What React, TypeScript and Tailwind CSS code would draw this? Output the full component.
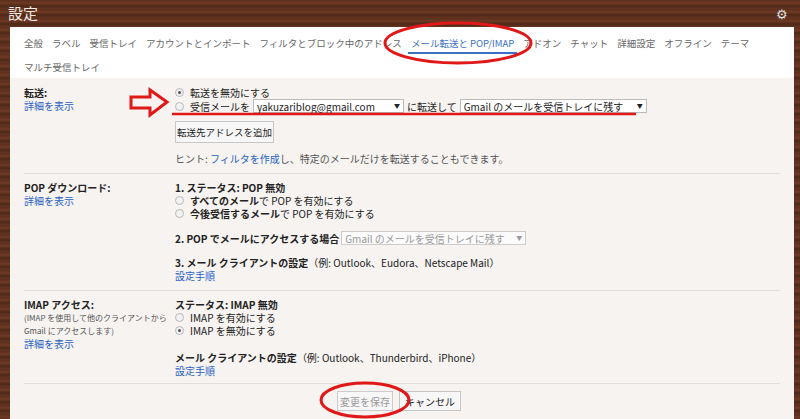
import React from "react";

const Radio = ({ on }: { on?: boolean }) => (
  <span className="inline-flex w-[9px] h-[9px] rounded-full border border-[#b8b8b8] bg-[#f2f2f2] items-center justify-center mr-[6px] shrink-0">
    {on && <span className="w-[3px] h-[3px] rounded-full bg-[#555]" />}
  </span>
);

const Link = ({ children }: { children: React.ReactNode }) => <span className="text-[#2a62c4]">{children}</span>;
const Arrow = () => <span className="text-[6px] leading-none">▼</span>;

export default function App() {
  const tabs = ["全般", "ラベル", "受信トレイ", "アカウントとインポート", "フィルタとブロック中のアドレス"];
  const tabs2 = ["アドオン", "チャット", "詳細設定", "オフライン", "テーマ"];
  return (
    <div
      className="relative w-[800px] h-[419px] overflow-hidden text-[10px] text-[#222] whitespace-nowrap"
      style={{
        fontFamily: '"Noto Sans CJK JP", "Liberation Sans", sans-serif',
        background: "repeating-linear-gradient(180deg,#5a2e1c 0px,#6e3a24 3px,#4e2817 6px,#653421 9px)",
      }}
    >
      <div className="h-[27px] flex items-center justify-between pl-[8px] pr-[12px]">
        <span className="text-[15px] text-[#f0e8e2]">設定</span>
        <span className="text-[#ddd] text-[13px]">⚙</span>
      </div>
      <div className="ml-[10px] w-[784px] h-[392px] bg-[#f6f3f0] flex flex-col">
        <div className="bg-white px-[14px] pt-[5px] h-[51px] text-[9.5px] text-[#666]">
          <div className="flex gap-[9px] h-[22px] items-center">
            {tabs.map((t) => <span key={t}>{t}</span>)}
            <span className="text-[#3b72c4] border-b-2 border-[#3b72c4] h-[22px] flex items-center px-[3px] -mx-[3px] pt-[2px]">メール転送と POP/IMAP</span>
            {tabs2.map((t) => <span key={t}>{t}</span>)}
          </div>
          <div className="h-[22px] flex items-center mt-[2px]">マルチ受信トレイ</div>
        </div>
        <div className="px-[14px]">
          <div className="flex pt-[8px] pb-[8px] border-b border-[#e2dedb]">
            <div className="w-[151px] leading-[13px]">
              <div className="font-bold">転送:</div>
              <Link>詳細を表示</Link>
            </div>
            <div className="flex-1 leading-[13px]">
              <div className="flex items-center"><Radio on /><span>転送を無効にする</span></div>
              <div className="flex items-center">
                <Radio /><span>受信メールを</span>
                <span className="ml-[3px] w-[151px] h-[14px] border border-[#bbb] bg-white flex items-center justify-between px-[3px] text-[10px]"><span>yakuzariblog@gmail.com</span><Arrow /></span>
                <span className="mx-[3px]">に転送して</span>
                <span className="w-[187px] h-[14px] border border-[#bbb] bg-white flex items-center justify-between px-[3px]"><span>Gmail のメールを受信トレイに残す</span><Arrow /></span>
              </div>
              <div className="mt-[8px] w-[99px] h-[22px] border border-[#c6c6c6] bg-[#f7f7f7] flex items-center justify-center text-[9.5px]">転送先アドレスを追加</div>
              <div className="mt-[9px] text-[#555]">ヒント: <Link>フィルタを作成</Link>し、特定のメールだけを転送することもできます。</div>
            </div>
          </div>
          <div className="flex pt-[7px] pb-[8px] border-b border-[#e2dedb] leading-[13px]">
            <div className="w-[151px]">
              <div className="font-bold">POP ダウンロード:</div>
              <Link>詳細を表示</Link>
            </div>
            <div className="flex-1">
              <div className="font-bold">1. ステータス: POP 無効</div>
              <div className="flex items-center"><Radio /><span><b>すべてのメール</b>で POP を有効にする</span></div>
              <div className="flex items-center"><Radio /><span><b>今後受信するメール</b>で POP を有効にする</span></div>
              <div className="flex items-center mt-[11px]">
                <b>2. POP でメールにアクセスする場合</b>
                <span className="ml-[2px] w-[185px] h-[14px] border border-[#ccc] bg-[#fbfbfb] text-[#999] flex items-center justify-between px-[3px]"><span>Gmail のメールを受信トレイに残す</span><Arrow /></span>
              </div>
              <div className="mt-[11px]"><b>3. メール クライアントの設定</b>（例: Outlook、Eudora、Netscape Mail）</div>
              <Link>設定手順</Link>
            </div>
          </div>
          <div className="flex pt-[7px] pb-[6px] border-b border-[#e2dedb] leading-[13px]">
            <div className="w-[151px]">
              <div className="font-bold">IMAP アクセス:</div>
              <div className="text-[8px] text-[#555] leading-[13px]">(IMAP を使用して他のクライアントから<br />Gmail にアクセスします)</div>
              <Link>詳細を表示</Link>
            </div>
            <div className="flex-1">
              <div className="font-bold">ステータス: IMAP 無効</div>
              <div className="flex items-center"><Radio /><span>IMAP を有効にする</span></div>
              <div className="flex items-center"><Radio on /><span>IMAP を無効にする</span></div>
              <div className="mt-[14px]"><b>メール クライアントの設定</b>（例: Outlook、Thunderbird、iPhone）</div>
              <Link>設定手順</Link>
            </div>
          </div>
          <div className="flex gap-[6px] pt-[7px] pl-[313px]">
            <span className="w-[56px] h-[20px] border border-[#ccc] bg-[#f7f7f7] text-[#999] flex items-center justify-center">変更を保存</span>
            <span className="w-[62px] h-[20px] border border-[#c6c6c6] bg-[#f7f7f7] flex items-center justify-center">キャンセル</span>
          </div>
        </div>
      </div>
      <svg className="absolute inset-0 pointer-events-none" width="800" height="419">
        <ellipse cx="458" cy="43" rx="73" ry="20" fill="none" stroke="#e01818" strokeWidth="3" />
        <ellipse cx="365" cy="400" rx="44" ry="17" fill="none" stroke="#e01818" strokeWidth="3" />
        <line x1="172" y1="114" x2="636" y2="114" stroke="#e01818" strokeWidth="2.5" />
        <path d="M131 97 L150 97 L150 90 L167 102 L150 115 L150 108 L131 108 Z" fill="none" stroke="#e01818" strokeWidth="3" strokeLinejoin="miter" />
      </svg>
    </div>
  );
}
